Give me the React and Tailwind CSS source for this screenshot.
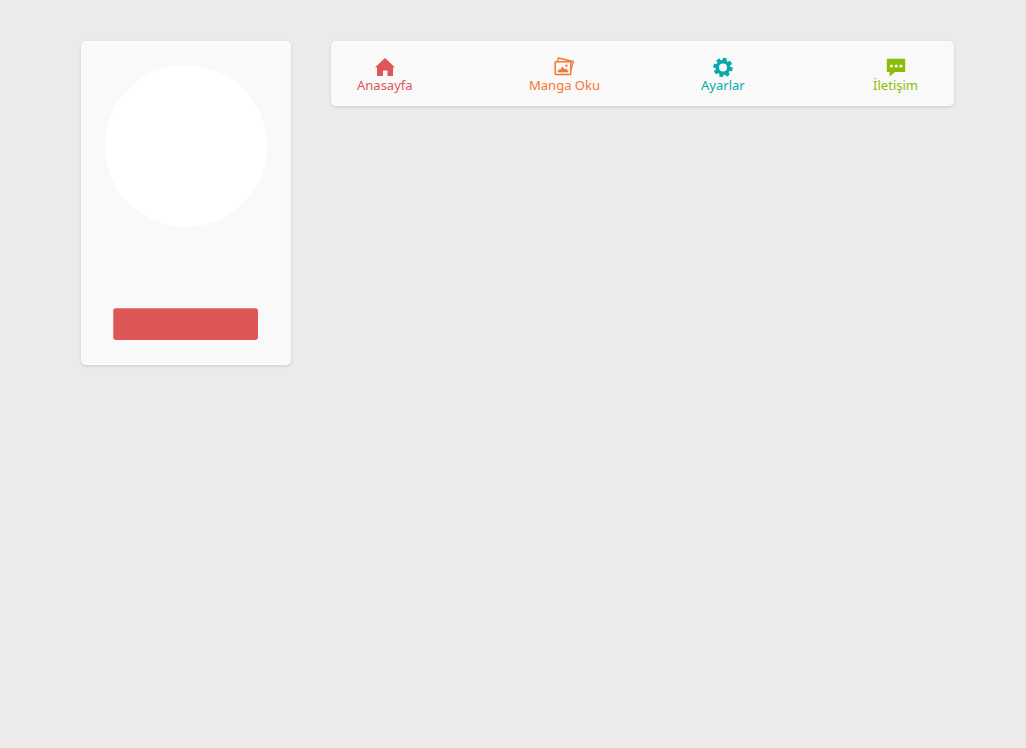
const links = [
  { label: "Anasayfa", color: "text-[#de5656]", icon: HomeIcon },
  { label: "Manga Oku", color: "text-[#f77632]", icon: PhotosIcon },
  { label: "Ayarlar", color: "text-[#08a9ac]", icon: GearIcon },
  { label: "İletişim", color: "text-[#8cbd06]", icon: ChatIcon },
];

function HomeIcon() {
  return (
    <svg className="h-5 w-5" viewBox="0 0 20 20" fill="currentColor" aria-hidden="true">
      <path d="M10 1 20 10.5H18V19H12.5V13.5H8V19H2V10.5H0Z" />
    </svg>
  );
}

function PhotosIcon() {
  return (
    <svg className="h-5 w-5" viewBox="0 0 20 20" fill="none" stroke="currentColor" strokeWidth="1.5" strokeLinejoin="round" aria-hidden="true">
      <path d="M3.4 4.4 4.4 0.9 19.2 4.6 16.8 13" />
      <rect x="1.2" y="4.8" width="15.6" height="12.8" rx="0.8" />
      <path d="M3.6 15.2V14.2L5.2 12.2 6.2 12.8 8.6 9.6 10.8 12.4 12 11.6 14.4 14.2V15.2Z" fill="currentColor" stroke="none" />
      <circle cx="12.4" cy="8.6" r="1.2" fill="currentColor" stroke="none" />
    </svg>
  );
}

function GearIcon() {
  return (
    <svg className="h-5 w-5" viewBox="0 0 20 20" aria-hidden="true">
      <g fill="currentColor" transform="rotate(12 10 10.5)">
        <rect x="8" y="0.8" width="4" height="19.4" rx="0.9" />
        <rect x="8" y="0.8" width="4" height="19.4" rx="0.9" transform="rotate(45 10 10.5)" />
        <rect x="8" y="0.8" width="4" height="19.4" rx="0.9" transform="rotate(90 10 10.5)" />
        <rect x="8" y="0.8" width="4" height="19.4" rx="0.9" transform="rotate(135 10 10.5)" />
        <circle cx="10" cy="10.5" r="7.4" />
      </g>
      <circle cx="10" cy="10.5" r="4" fill="#f9f9f9" />
    </svg>
  );
}

function ChatIcon() {
  return (
    <svg className="h-5 w-5" viewBox="0 0 20 20" aria-hidden="true">
      <path d="M1.6 1.8H18.4Q19.2 1.8 19.2 2.6V14.2Q19.2 15 18.4 15H9L3.6 19.4V15H1.6Q0.8 15 0.8 14.2V2.6Q0.8 1.8 1.6 1.8Z" fill="currentColor" />
      <g fill="#f9f9f9">
        <circle cx="5.4" cy="9" r="1.6" />
        <circle cx="10.2" cy="9" r="1.6" />
        <circle cx="15" cy="9" r="1.6" />
      </g>
    </svg>
  );
}

export default function App() {
  return (
    <div className="flex min-h-screen items-start gap-10 bg-[#ebebeb] pt-[41px] pr-18 pl-[81px] font-['Noto_Sans',sans-serif]">
      <aside className="flex w-[210px] shrink-0 flex-col items-start rounded-[5px] border-y border-[#fdfdfd] bg-[#f9f9f9] px-6 pt-[23px] pb-6 shadow-[0_1px_3px_rgba(0,0,0,0.15)]">
        <div className="h-[162px] w-[162px] rounded-full bg-white" />
        <button
          type="button"
          aria-label="Profil"
          className="mt-[81px] ml-2 h-8 w-[145px] rounded-[3px] border-t border-l border-[#e48080] bg-[#de5656]"
        />
      </aside>
      <nav className="grid min-w-0 flex-1 grid-cols-[1fr_1fr_1fr_auto] rounded-[5px] border-y border-[#fdfdfd] bg-[#f9f9f9] pt-[15px] pr-9 pb-3 pl-[26px] shadow-[0_1px_3px_rgba(0,0,0,0.15)]">
        {links.map(({ label, color, icon: Icon }) => (
          <a key={label} href="#" className={`flex flex-col items-center justify-self-start text-[13px] leading-4 ${color}`}>
            <Icon />
            <span>{label}</span>
          </a>
        ))}
      </nav>
    </div>
  );
}
